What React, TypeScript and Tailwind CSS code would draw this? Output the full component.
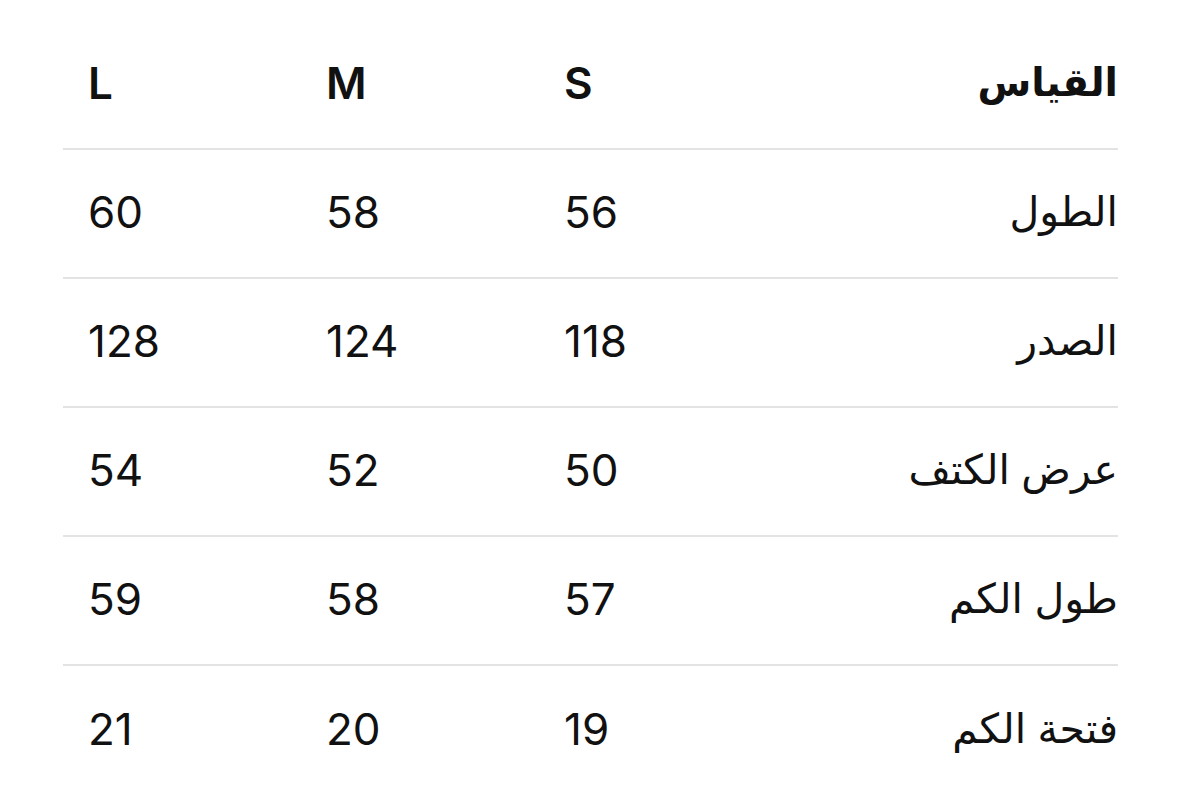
import React from 'react';

const rows = [
  { label: 'الطول', s: '56', m: '58', l: '60' },
  { label: 'الصدر', s: '118', m: '124', l: '128' },
  { label: 'عرض الكتف', s: '50', m: '52', l: '54' },
  { label: 'طول الكم', s: '57', m: '58', l: '59' },
  { label: 'فتحة الكم', s: '19', m: '20', l: '21' },
];

const font = { fontFamily: "Inter, 'DejaVu Sans', sans-serif" };

export default function App() {
  return (
    <div className="w-[1179px] h-[807px] overflow-hidden bg-white text-[#111]" style={font}>
      <div dir="rtl" className="ml-[63px] w-[1055px] pt-[21px]">
        <div className="grid grid-cols-[341px_238px_238px_238px] h-[129px] pb-1 items-center border-b-2 border-[#e3e3e3] text-[44px] font-semibold">
          <div className="text-right text-[39px] font-bold">القياس</div>
          <div className="text-left pl-[25px]">S</div>
          <div className="text-left pl-[25px]">M</div>
          <div className="text-left pl-[25px]">L</div>
        </div>
        {rows.map((r, i) => (
          <div
            key={r.label}
            className={`grid grid-cols-[341px_238px_238px_238px] h-[129px] pb-1 items-center text-[44px] ${
              i < rows.length - 1 ? 'border-b-2 border-[#e3e3e3]' : ''
            }`}
          >
            <div className="text-right text-[41px]">{r.label}</div>
            <div className="text-left pl-[25px]">{r.s}</div>
            <div className="text-left pl-[25px]">{r.m}</div>
            <div className="text-left pl-[25px]">{r.l}</div>
          </div>
        ))}
      </div>
    </div>
  );
}
